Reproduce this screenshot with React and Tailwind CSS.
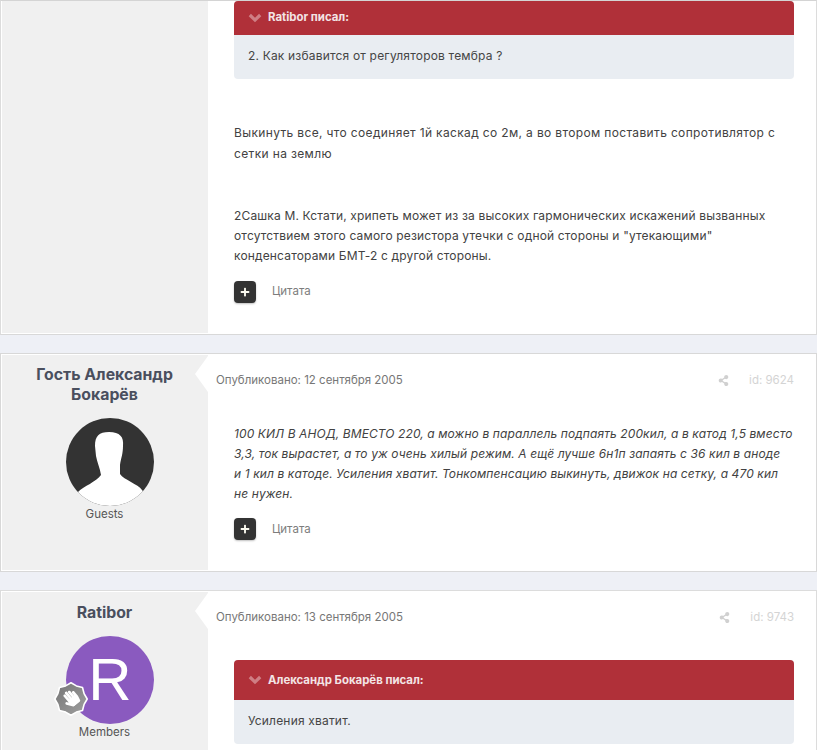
import React from "react";
import { FaPlus, FaShareAlt, FaHandPaper } from "react-icons/fa";

function Quote({ author, text, headClass }) {
  return (
    <div className="mr-[22px] overflow-hidden rounded-[4px] bg-[#e9edf2]">
      <div className={`flex items-center bg-[#b03039] pl-[14px] text-[11.4px] font-bold text-[#f3e4e5] ${headClass}`}>
        <svg viewBox="0 0 14 10" className="mr-[6px] h-[10px] w-[14px]">
          <path d="M1.8 2 L7 7 L12.2 2" fill="none" stroke="#cf7e84" strokeWidth="3.2" />
        </svg>
        <span>{author} писал:</span>
      </div>
      <p className="px-[14px] pb-[14px] pt-[12px] text-[12px] leading-[18px] tracking-[0.18px] text-[#454545]">{text}</p>
    </div>
  );
}

function Actions({ className }) {
  return (
    <div className={`flex items-center ${className}`}>
      <div className="flex h-[22px] w-[22px] items-center justify-center rounded-[4px] bg-[#333333] shadow-[0_1px_2px_rgba(0,0,0,0.25)]">
        <FaPlus className="h-[10px] w-[10px] text-[#fbfaf0]" />
      </div>
      <span className="ml-[16px] text-[11.5px] text-[#7d7d7d]">Цитата</span>
    </div>
  );
}

function Meta({ date, id }) {
  return (
    <div className="flex items-center pr-[22px] pl-[8px] text-[11.5px]">
      <span className="text-[#777777]">Опубликовано: {date}</span>
      <FaShareAlt className="ml-auto h-[11px] w-[11px] text-[#d0d0d0]" />
      <span className="ml-[20px] text-[#d4d4d4]">id: {id}</span>
    </div>
  );
}

function Notch() {
  return <div className="absolute right-0 top-[1px] h-[36px] w-[13px] bg-white [clip-path:polygon(100%_0,0_50%,100%_100%)]" />;
}

function GuestAvatar() {
  return (
    <svg viewBox="0 0 88 88" className="ml-[64px] block h-[88px] w-[88px]">
      <defs>
        <clipPath id="guest-clip"><circle cx="44" cy="44" r="44" /></clipPath>
      </defs>
      <g clipPath="url(#guest-clip)">
        <rect width="88" height="88" fill="#333333" />
        <path d="M29 28 C29 18 33 14 43 14 C54 14 58 19 57 28 C57 36 55 40 54 47 L54 56 C58 62 72 66 76 72 L88 88 L0 88 L12 74 C18 68 30 64 35 57 C34 50 31 44 30 38 Z" fill="#ffffff" />
      </g>
    </svg>
  );
}

function Badge() {
  const pts = [];
  for (let i = 0; i < 16; i++) {
    const r = i % 2 === 0 ? 16.2 : 14.2;
    const a = (i * Math.PI) / 8;
    pts.push(`${(17 + r * Math.sin(a)).toFixed(1)},${(17 - r * Math.cos(a)).toFixed(1)}`);
  }
  return (
    <svg viewBox="0 0 34 34" className="absolute left-[-12px] top-[46px] h-[34px] w-[34px]">
      <defs>
        <linearGradient id="badge-fill" x1="0" y1="0" x2="1" y2="1">
          <stop offset="0" stopColor="#757575" />
          <stop offset="1" stopColor="#a0a0a0" />
        </linearGradient>
      </defs>
      <polygon points={pts.join(" ")} fill="url(#badge-fill)" stroke="#ffffff" strokeWidth="1.6" strokeLinejoin="round" />
    </svg>
  );
}

export default function App() {
  return (
    <div className="flex h-[750px] w-[817px] flex-col gap-[18px] overflow-hidden bg-[#eef0f6] font-['Inter','Liberation_Sans',sans-serif]">
      <article className="flex h-[335px] shrink-0 border border-t-[#d4d4d4] border-b-[#d8d8d8] border-x-[#dcdcdc] bg-white pl-[1px]">
        <aside className="mb-[1px] w-[206px] shrink-0 bg-[#f0f0f0]" />
        <div className="flex-1 pl-[26px]">
          <Quote author="Ratibor" text="2. Как избавится от регуляторов тембра ?" headClass="h-[34px]" />
          <p className="mt-[43px] pr-[16px] text-[12px] leading-[21px] tracking-[0.35px] text-[#424242]">Выкинуть все, что соединяет 1й каскад со 2м, а во втором поставить сопротивлятор с сетки на землю</p>
          <p className="mt-[42px] pr-[22px] text-[12px] leading-[20px] tracking-[0.16px] text-[#424242]">2Сашка М. Кстати, хрипеть может из за высоких гармонических искажений вызванных отсутствием этого самого резистора утечки с одной стороны и "утекающими" конденсаторами БМТ-2 с другой стороны.</p>
          <Actions className="mt-[15px]" />
        </div>
      </article>

      <article className="flex h-[219px] shrink-0 border border-[#d8d8d8] bg-white pl-[1px]">
        <aside className="relative my-[1px] w-[206px] shrink-0 bg-[#f0f0f0] pr-[1px] text-center">
          <Notch />
          <h3 className="mt-[10px] text-[15.8px] font-bold leading-[20px] text-[#4a4f5e]">Гость Александр<br />Бокарёв</h3>
          <div className="mt-[13px]"><GuestAvatar /></div>
          <p className="mt-0 text-[11.5px] text-[#555555]">Guests</p>
        </aside>
        <div className="flex-1">
          <div className="mt-[18px]"><Meta date="12 сентября 2005" id="9624" /></div>
          <div className="pl-[26px]">
            <p className="mt-[35px] pr-[16px] text-[12px] italic leading-[20px] tracking-[0.1px] text-[#424242]">100 КИЛ В АНОД, ВМЕСТО 220, а можно в параллель подпаять 200кил, а в катод 1,5 вместо 3,3, ток вырастет, а то уж очень хилый режим. А ещё лучше 6н1п запаять с 36 кил в аноде<br />и 1 кил в катоде. Усиления хватит. Тонкомпенсацию выкинуть, движок на сетку, а 470 кил<br />не нужен.</p>
            <Actions className="mt-[14px]" />
          </div>
        </div>
      </article>

      <article className="flex h-[200px] shrink-0 border-t border-x border-[#dcdcdc] bg-white pl-[1px]">
        <aside className="relative mt-[1px] w-[206px] shrink-0 bg-[#f0f0f0] pr-[1px] text-center">
          <Notch />
          <h3 className="mt-[11px] text-[15.8px] font-bold leading-[20px] text-[#4a4f5e]">Ratibor</h3>
          <div className="relative ml-[64px] mt-[13px] h-[88px] w-[88px]">
            <div className="flex h-[88px] w-[88px] items-center justify-center rounded-full bg-[#8a5abf] font-['Liberation_Sans',sans-serif] text-[60px] leading-none text-white">R</div>
            <Badge />
            <FaHandPaper className="absolute left-[-4px] top-[54px] h-[17px] w-[17px] -rotate-[40deg] text-white" />
          </div>
          <p className="mt-0 text-[11.5px] text-[#555555]">Members</p>
        </aside>
        <div className="flex-1">
          <div className="mt-[18px]"><Meta date="13 сентября 2005" id="9743" /></div>
          <div className="mt-[34px] pl-[26px]">
            <Quote author="Александр Бокарёв" text="Усиления хватит." headClass="h-[40px]" />
          </div>
        </div>
      </article>
    </div>
  );
}
